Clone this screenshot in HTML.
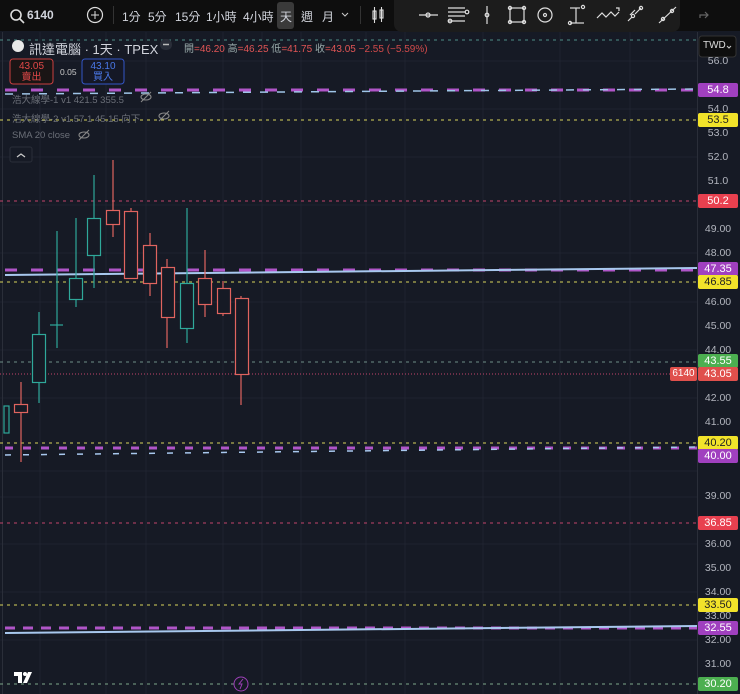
<!DOCTYPE html>
<html><head><meta charset="utf-8"><style>
*{margin:0;padding:0;box-sizing:border-box}
body{width:740px;height:694px;background:#161a25;overflow:hidden;font-family:"Liberation Sans","Noto Sans CJK TC",sans-serif;position:relative;color:#d1d4dc}
.top{position:absolute;left:0;top:0;width:740px;height:31px;background:#0e0e0e}
.t{position:absolute;top:8px;font-size:12px;color:#d1d4dc}
.lbl{position:absolute;left:698px;width:40px;height:14px;font-size:11px;line-height:14px;text-align:center;border-radius:2px;font-family:"Liberation Sans",sans-serif}
.ax{position:absolute;left:700px;width:36px;font-size:10.5px;color:#b2b5be;text-align:center}
</style></head><body>
<div class="top"></div>
<svg style="position:absolute;left:0;top:0" width="740" height="32">
<circle cx="16" cy="15" r="5" fill="none" stroke="#ddd" stroke-width="1.6"/><line x1="20" y1="19" x2="24" y2="23" stroke="#ddd" stroke-width="1.6"/>
<circle cx="95" cy="15" r="7.5" fill="none" stroke="#ddd" stroke-width="1.2"/><line x1="91" y1="15" x2="99" y2="15" stroke="#ddd"/><line x1="95" y1="11" x2="95" y2="19" stroke="#ddd"/>
<line x1="113.5" y1="6" x2="113.5" y2="24" stroke="#333"/>
<rect x="277" y="2" width="17" height="27" rx="3" fill="#3a3a3a"/>
<path d="M342 13l3 3 3-3" fill="none" stroke="#ccc"/>
<line x1="360.5" y1="6" x2="360.5" y2="24" stroke="#333"/>
<g stroke="#ddd" fill="none" stroke-width="1.1"><rect x="373" y="11" width="3" height="8"/><line x1="374.5" y1="7" x2="374.5" y2="23"/><rect x="380" y="10" width="3" height="8"/><line x1="381.5" y1="7" x2="381.5" y2="22"/></g>
<path d="M394 0h286v24a8 8 0 0 1-8 8H402a8 8 0 0 1-8-8z" fill="#1c1c1c"/>
<g stroke="#ddd" fill="none" stroke-width="1.2">
<line x1="419" y1="15" x2="438" y2="15"/><circle cx="428" cy="15" r="2"/>
<line x1="448" y1="8" x2="465" y2="8"/><line x1="448" y1="12" x2="465" y2="12"/><line x1="448" y1="16" x2="465" y2="16"/><line x1="448" y1="21" x2="465" y2="21"/><circle cx="467" cy="12" r="1.8"/><circle cx="450" cy="21" r="1.8"/>
<line x1="487" y1="6" x2="487" y2="24"/><circle cx="487" cy="15" r="1.8"/>
<rect x="510" y="8" width="14" height="14"/><circle cx="510" cy="8" r="1.6"/><circle cx="524" cy="8" r="1.6"/><circle cx="510" cy="22" r="1.6"/><circle cx="524" cy="22" r="1.6"/>
<circle cx="545" cy="15" r="7"/><circle cx="545" cy="15" r="1.5"/>
<line x1="570" y1="8" x2="580" y2="8"/><line x1="570" y1="23" x2="584" y2="23"/><line x1="576" y1="8" x2="576" y2="23"/><circle cx="583" cy="7" r="1.6"/><circle cx="570" cy="23" r="1.6"/>
<path d="M597 18l5-5 4 4 5-5 4 4 4-4"/><path d="M616 8h3v3"/>
<path d="M628 21l4-4m3-3l6-6"/><circle cx="633" cy="16" r="1.6"/><circle cx="641" cy="8" r="1.6"/><path d="M630 15l5-5"/>
<path d="M659 23l17-16"/><circle cx="663" cy="19" r="1.6"/><circle cx="672" cy="11" r="1.6"/>
</g>
<path d="M700 18v-3h8m-3-3l3 3-3 3" fill="none" stroke="#666" stroke-width="1.2"/>
</svg>
<div class="t" style="left:27px;font-weight:bold">6140</div>
<div class="t" style="left:122px">1分</div><div class="t" style="left:148px">5分</div><div class="t" style="left:175px">15分</div><div class="t" style="left:206px">1小時</div><div class="t" style="left:243px">4小時</div><div class="t" style="left:280px">天</div><div class="t" style="left:301px">週</div><div class="t" style="left:322px">月</div>

<svg style="position:absolute;left:0;top:31px" width="740" height="663">
<g transform="translate(0,-31)">
<g stroke="#1f2330" stroke-width="1">
<line x1="40" y1="32" x2="40" y2="694"/><line x1="106" y1="32" x2="106" y2="694"/><line x1="146" y1="32" x2="146" y2="694"/><line x1="223" y1="32" x2="223" y2="694"/><line x1="262" y1="32" x2="262" y2="694"/><line x1="301" y1="32" x2="301" y2="694"/><line x1="366" y1="32" x2="366" y2="694"/><line x1="405" y1="32" x2="405" y2="694"/><line x1="483" y1="32" x2="483" y2="694"/><line x1="560" y1="32" x2="560" y2="694"/><line x1="630" y1="32" x2="630" y2="694"/>
<line x1="0" y1="61" x2="697" y2="61"/><line x1="0" y1="109" x2="697" y2="109"/><line x1="0" y1="157" x2="697" y2="157"/><line x1="0" y1="205" x2="697" y2="205"/><line x1="0" y1="253" x2="697" y2="253"/><line x1="0" y1="302" x2="697" y2="302"/><line x1="0" y1="350" x2="697" y2="350"/><line x1="0" y1="398" x2="697" y2="398"/><line x1="0" y1="471" x2="697" y2="471"/><line x1="0" y1="497" x2="697" y2="497"/><line x1="0" y1="544" x2="697" y2="544"/><line x1="0" y1="592" x2="697" y2="592"/><line x1="0" y1="640" x2="697" y2="640"/>
</g>
<line x1="697.5" y1="32" x2="697.5" y2="694" stroke="#2a2e39"/>
<line x1="2.5" y1="32" x2="2.5" y2="694" stroke="#2a2e39"/>
<g fill="none" stroke-width="1">
<line x1="0" y1="40" x2="697" y2="40" stroke="#4e8f86" stroke-dasharray="3,4"/>
<line x1="0" y1="120" x2="697" y2="120" stroke="#d8d45a" stroke-dasharray="3,4"/>
<line x1="0" y1="201" x2="697" y2="201" stroke="#c2446c" stroke-dasharray="3,4"/>
<line x1="0" y1="282" x2="697" y2="282" stroke="#d8d45a" stroke-dasharray="3,4"/>
<line x1="0" y1="362" x2="697" y2="362" stroke="#6f8e87" stroke-dasharray="3,4"/>
<line x1="0" y1="374" x2="697" y2="374" stroke="#c2446c" stroke-dasharray="1,2"/>
<line x1="0" y1="443" x2="697" y2="443" stroke="#d8d45a" stroke-dasharray="3,4"/>
<line x1="0" y1="523" x2="697" y2="523" stroke="#c2446c" stroke-dasharray="3,4"/>
<line x1="0" y1="605" x2="697" y2="605" stroke="#d8d45a" stroke-dasharray="3,4"/>
<line x1="0" y1="684" x2="697" y2="684" stroke="#7fa88a" stroke-dasharray="3,4"/>
<line x1="5" y1="90" x2="697" y2="90" stroke="#b055c8" stroke-width="3" stroke-dasharray="12,14"/>
<line x1="5" y1="94" x2="697" y2="89" stroke="#9fc5e8" stroke-width="1.5" stroke-dasharray="8,9"/>
<line x1="5" y1="270" x2="697" y2="270" stroke="#b055c8" stroke-width="3" stroke-dasharray="12,14"/>
<line x1="5" y1="275" x2="697" y2="268" stroke="#a8c8ee" stroke-width="2"/>
<line x1="5" y1="448" x2="697" y2="448" stroke="#b055c8" stroke-width="3" stroke-dasharray="8,10"/>
<line x1="5" y1="455" x2="697" y2="447" stroke="#a8c8ee" stroke-width="1.5" stroke-dasharray="6,12"/>
<line x1="5" y1="628" x2="697" y2="628" stroke="#b055c8" stroke-width="3" stroke-dasharray="10,8"/>
<line x1="5" y1="633" x2="697" y2="626" stroke="#a8c8ee" stroke-width="2"/>
</g>
<g fill="#161a25" stroke-width="1.2">
<g stroke="#2fa89a">
<rect x="4" y="406" width="5" height="27"/>
<line x1="39" y1="312" x2="39" y2="334"/><line x1="39" y1="382" x2="39" y2="403"/><rect x="32.5" y="334.5" width="13" height="48"/>
<line x1="57" y1="231" x2="57" y2="348"/><line x1="50" y1="325" x2="63" y2="325"/>
<line x1="76" y1="218" x2="76" y2="307"/><rect x="69.5" y="278.5" width="13" height="21"/>
<line x1="94" y1="175" x2="94" y2="288"/><rect x="87.5" y="218.5" width="13" height="37"/>
<line x1="187" y1="208" x2="187" y2="343"/><rect x="180.5" y="283.5" width="13" height="45"/>
</g>
<g stroke="#e0645f">
<line x1="21" y1="382" x2="21" y2="462"/><rect x="14.5" y="404.5" width="13" height="8"/>
<line x1="113" y1="160" x2="113" y2="237"/><rect x="106.5" y="210.5" width="13" height="14"/>
<line x1="131" y1="208" x2="131" y2="278"/><rect x="124.5" y="211.5" width="13" height="67"/>
<line x1="150" y1="233" x2="150" y2="296"/><rect x="143.5" y="245.5" width="13" height="38"/>
<line x1="167" y1="259" x2="167" y2="348"/><rect x="161.5" y="267.5" width="13" height="50"/>
<line x1="205" y1="250" x2="205" y2="317"/><rect x="198.5" y="278.5" width="13" height="26"/>
<line x1="223" y1="281" x2="223" y2="316"/><rect x="217.5" y="288.5" width="13" height="25"/>
<line x1="241" y1="296" x2="241" y2="405"/><rect x="235.5" y="298.5" width="13" height="76"/>
</g>
</g>
<rect x="10" y="147" width="22" height="15" rx="2" fill="#161a25" stroke="#2a2e39"/>
<path d="M17 157l4-3 4 3" fill="none" stroke="#ccc" stroke-width="1.2"/>
<circle cx="18" cy="46" r="6" fill="#e8e8e8"/>
<rect x="160" y="39" width="12" height="11" rx="5" fill="#2a2e39"/><line x1="163" y1="44.5" x2="169" y2="44.5" stroke="#bbb" stroke-width="1.5"/>
<rect x="10" y="59" width="43" height="25" rx="3" fill="#1a1515" stroke="#c94040"/>
<rect x="82" y="59" width="42" height="25" rx="3" fill="#151826" stroke="#3356c7"/>
<g fill="none" stroke="#888" stroke-width="1.1"><ellipse cx="146" cy="97" rx="5" ry="3"/><line x1="141" y1="102" x2="151" y2="92"/><ellipse cx="164" cy="116" rx="5" ry="3"/><line x1="159" y1="121" x2="169" y2="111"/><ellipse cx="84" cy="135" rx="5" ry="3"/><line x1="79" y1="140" x2="89" y2="130"/></g>
<circle cx="241" cy="684" r="7" fill="#161a25" stroke="#9c3fb6"/><path d="M243 679l-4 5h3l-2 5" fill="none" stroke="#9c3fb6"/>
<path d="M14 672h8v11h-4v-7h-4z" fill="#fff"/><circle cx="25" cy="674" r="2" fill="#fff"/><path d="M28 672h4l-5 11h-4z" fill="#fff"/>
<rect x="699" y="36" width="37" height="21" rx="3" fill="#0e0e0e" stroke="#333"/>
<path d="M727 46l2 2 2-2" fill="none" stroke="#ccc"/>
</g>
</svg>
<div style="position:absolute;left:29px;top:39px;font-size:13px;color:#d1d4dc">訊達電腦 · 1天 · TPEX</div>
<div style="position:absolute;left:184px;top:40px;font-size:10px;color:#9aa"><span>開</span><span style="color:#e05555">=46.20</span> 高<span style="color:#e05555">=46.25</span> 低<span style="color:#e05555">=41.75</span> 收<span style="color:#e05555">=43.05</span> <span style="color:#d04a4a">−2.55 (−5.59%)</span></div>
<div style="position:absolute;left:10px;top:61px;width:43px;text-align:center;font-size:10px;line-height:11px;color:#e04848">43.05<br>賣出</div>
<div style="position:absolute;left:60px;top:67px;font-size:8.5px;color:#ccc">0.05</div>
<div style="position:absolute;left:82px;top:61px;width:42px;text-align:center;font-size:10px;line-height:11px;color:#4a78e8">43.10<br>買入</div>
<div style="position:absolute;left:12px;top:92px;font-size:9.5px;color:#6b6f78">浩大線學-1 v1 421.5 355.5</div>
<div style="position:absolute;left:12px;top:111px;font-size:9.5px;color:#6b6f78">浩大線學-2 v1.57 1 45.15 向下</div>
<div style="position:absolute;left:12px;top:130px;font-size:9.5px;color:#6b6f78">SMA 20 close</div>
<div style="position:absolute;left:703px;top:40px;font-size:10px;color:#ddd">TWD</div>
<div class="ax" style="top:55px">56.0</div><div class="ax" style="top:103px">54.0</div><div class="ax" style="top:127px">53.0</div><div class="ax" style="top:151px">52.0</div><div class="ax" style="top:175px">51.0</div><div class="ax" style="top:223px">49.00</div><div class="ax" style="top:247px">48.00</div><div class="ax" style="top:296px">46.00</div><div class="ax" style="top:320px">45.00</div><div class="ax" style="top:344px">44.00</div><div class="ax" style="top:392px">42.00</div><div class="ax" style="top:416px">41.00</div><div class="ax" style="top:490px">39.00</div><div class="ax" style="top:514px">38.00</div><div class="ax" style="top:538px">36.00</div><div class="ax" style="top:562px">35.00</div><div class="ax" style="top:586px">34.00</div><div class="ax" style="top:610px">33.00</div><div class="ax" style="top:634px">32.00</div><div class="ax" style="top:658px">31.00</div>
<div class="lbl" style="top:83px;background:#a040bf;color:#fff">54.8</div>
<div class="lbl" style="top:113px;background:#f2e32a;color:#222">53.5</div>
<div class="lbl" style="top:194px;background:#e8404f;color:#fff">50.2</div>
<div class="lbl" style="top:262px;background:#a040bf;color:#fff">47.35</div>
<div class="lbl" style="top:275px;background:#f2e32a;color:#222">46.85</div>
<div class="lbl" style="top:354px;background:#4caf50;color:#fff">43.55</div>
<div class="lbl" style="top:367px;background:#e0504c;color:#fff">43.05</div>
<div style="position:absolute;left:670px;top:367px;width:27px;height:14px;background:#e0504c;color:#fff;font-size:10px;line-height:14px;text-align:center;border-radius:2px">6140</div>
<div class="lbl" style="top:436px;background:#f2e32a;color:#222">40.20</div>
<div class="lbl" style="top:449px;background:#a040bf;color:#fff">40.00</div>
<div class="lbl" style="top:516px;background:#e8404f;color:#fff">36.85</div>
<div class="lbl" style="top:598px;background:#f2e32a;color:#222">33.50</div>
<div class="lbl" style="top:621px;background:#a040bf;color:#fff">32.55</div>
<div class="lbl" style="top:677px;background:#4caf50;color:#fff">30.20</div>
</body></html>
